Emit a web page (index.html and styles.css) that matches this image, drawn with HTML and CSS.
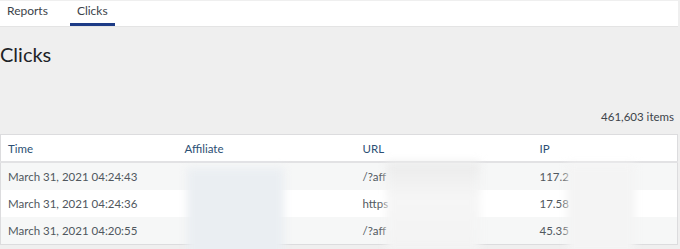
FILE: index.html
```html
<!DOCTYPE html>
<html lang="en">
<head>
  <meta charset="UTF-8" />
  <title>Clicks</title>
  <link rel="stylesheet" href="styles.css">
</head>
<body>
  <nav class="tabs">
    <a class="tab">Reports</a>
    <a class="tab active">Clicks</a>
  </nav>

  <h1 class="title">Clicks</h1>

  <div class="count">461,603 items</div>

  <div class="table-wrap">
    <table class="clicks">
      <colgroup>
        <col class="col-time">
        <col class="col-affiliate">
        <col class="col-url">
        <col>
      </colgroup>
      <thead>
        <tr>
          <th>Time</th>
          <th>Affiliate</th>
          <th>URL</th>
          <th>IP</th>
        </tr>
      </thead>
      <tbody>
        <tr>
          <td>March 31, 2021 04:24:43</td>
          <td></td>
          <td>/?aff</td>
          <td>117.2</td>
        </tr>
        <tr>
          <td>March 31, 2021 04:24:36</td>
          <td></td>
          <td>https</td>
          <td>17.58</td>
        </tr>
        <tr>
          <td>March 31, 2021 04:20:55</td>
          <td></td>
          <td>/?aff</td>
          <td>45.35</td>
        </tr>
      </tbody>
    </table>
    <!-- redacted values -->
    <div class="blur blur-affiliate"></div>
    <div class="blur blur-url"></div>
    <div class="blur blur-ip"></div>
  </div>
</body>
</html>
```
FILE: styles.css
```css
body {
  margin: 0;
  background: #efefef;
  font-family: 'Lato', 'Open Sans', sans-serif;
  color: #3c434a;
  width: 680px;
  height: 249px;
  overflow: hidden;
}
.tabs {
  margin: 1px 2px 0 0;
  height: 25px;
  background: #fff;
  display: flex;
  border-bottom: 1px solid #e4e4e4;
}
.tab {
  font-size: 12px;
  color: #3c434a;
  padding: 2px 7px 0;
  box-sizing: border-box;
  height: 25px;
}
.tab.active {
  margin-left: 15px;
  padding: 2px 7px 0;
  border-bottom: 3px solid #1d3b86;
}
.title {
  margin: 14px 0 0;
  font-size: 20px;
  font-weight: 400;
  color: #1d2327;
  line-height: 26px;
}
.count {
  margin-top: 42px;
  text-align: right;
  font-size: 11.5px;
  padding-right: 6px;
  line-height: 15px;
}
.table-wrap {
  position: relative;
  margin-top: 10px;
}
.clicks {
  width: 678px;
  border-collapse: collapse;
  background: #fff;
  border: 1px solid #dcdcde;
  font-size: 11.5px;
  table-layout: fixed;
}
.col-time { width: 177px; }
.col-affiliate { width: 178px; }
.col-url { width: 177px; }
.clicks th {
  text-align: left;
  font-weight: 400;
  color: #2c4f74;
  height: 26px;
  padding: 0 7px;
  border-bottom: 2px solid #e2e2e4;
}
.clicks td {
  height: 27px;
  padding: 0 7px;
  color: #50575e;
}
.clicks tbody tr:nth-child(odd) {
  background: #f6f7f7;
}
.blur {
  position: absolute;
  filter: blur(4px);
}
.blur-affiliate {
  left: 187px;
  top: 34px;
  width: 97px;
  height: 90px;
  background: #eaeef2;
}
.blur-url {
  left: 386px;
  top: 28px;
  width: 94px;
  height: 90px;
  background: linear-gradient(#ebebeb, #f6f6f6 40%, #f3f3f3);
}
.blur-ip {
  left: 567px;
  top: 30px;
  width: 68px;
  height: 90px;
  background: #f4f4f4;
}
```
